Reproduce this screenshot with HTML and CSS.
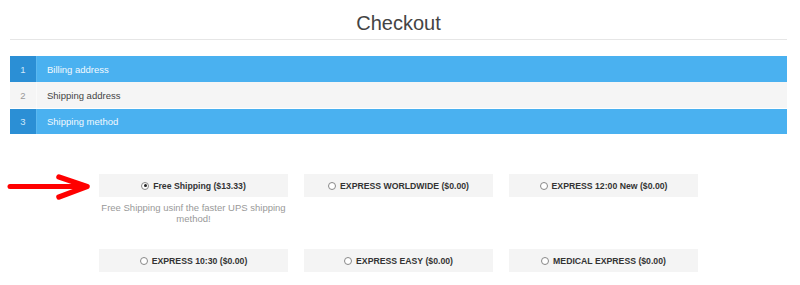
FILE: index.html
```html
<!DOCTYPE html>
<html lang="en">
<head>
  <meta charset="UTF-8" />
  <title>Checkout</title>
  <link rel="stylesheet" href="styles.css">
</head>
<body>
  <div class="page">
    <h1 class="title">Checkout</h1>

    <div class="steps">
      <div class="step active"><span class="num">1</span><span class="label">Billing address</span></div>
      <div class="step"><span class="num">2</span><span class="label">Shipping address</span></div>
      <div class="step active"><span class="num">3</span><span class="label">Shipping method</span></div>
    </div>

    <div class="methods">
      <div class="method">
        <label class="option"><span class="radio checked"></span>Free Shipping ($13.33)</label>
        <p class="desc">Free Shipping usinf the faster UPS shipping method!</p>
      </div>
      <div class="method">
        <label class="option"><span class="radio"></span>EXPRESS WORLDWIDE ($0.00)</label>
      </div>
      <div class="method">
        <label class="option"><span class="radio"></span>EXPRESS 12:00 New ($0.00)</label>
      </div>
      <div class="method">
        <label class="option"><span class="radio"></span>EXPRESS 10:30 ($0.00)</label>
      </div>
      <div class="method">
        <label class="option"><span class="radio"></span>EXPRESS EASY ($0.00)</label>
      </div>
      <div class="method">
        <label class="option"><span class="radio"></span>MEDICAL EXPRESS ($0.00)</label>
      </div>
    </div>

    <!-- annotation arrow pointing at the selected option -->
    <svg class="arrow" width="100" height="35" viewBox="0 0 100 35">
      <line x1="10" y1="16.5" x2="84" y2="16.5" stroke="#f00" stroke-width="5" stroke-linecap="round" />
      <polyline points="59,7 87,16.5 59,27" fill="none" stroke="#f00" stroke-width="5.5" stroke-linecap="round" stroke-linejoin="round" />
    </svg>
  </div>
</body>
</html>
```

FILE: styles.css
```css
body { margin: 0; font-family: "Liberation Sans", Arial, sans-serif; color: #333; background: #fff; }
.page { position: relative; padding: 0 13px 0 10px; }

.title { margin: 0; padding-top: 11px; height: 28px; text-align: center; font-size: 20px; font-weight: normal; color: #444; line-height: 24px; border-bottom: 1px solid #e6e6e6; }

.steps { margin-top: 16px; }
.step { display: flex; height: 26px; align-items: center; background: #f5f5f5; font-size: 9.5px; color: #444; }
.step .num { width: 27px; height: 100%; display: flex; align-items: center; justify-content: center; color: #999; border-right: 1px solid #fafafa; box-sizing: border-box; }
.step .label { padding-left: 10px; }
.step.active { background: #4ab1f0; color: #f2f9fe; }
.step.active .num { background: #2b8fd5; color: #cfe8fa; border-right: 1px solid #5bb8f0; }
.step:last-child { margin-top: 1px; height: 25px; }

.methods { margin: 40px auto 0; width: 599px; display: grid; grid-template-columns: repeat(3, 189px); column-gap: 16px; row-gap: 25px; align-items: start; }
.option { display: flex; align-items: center; justify-content: center; height: 23px; background: #f4f4f4; font-size: 8.7px; font-weight: bold; color: #333; }
.radio { width: 6px; height: 6px; border: 1px solid #888; border-radius: 50%; margin-right: 4px; position: relative; background: #fff; }
.radio.checked::after { content: ""; position: absolute; left: 1.5px; top: 1.5px; width: 3px; height: 3px; border-radius: 50%; background: #222; }
.desc { margin: 5px -6px 0; text-align: center; font-size: 9.5px; line-height: 11px; color: #999; }

.arrow { position: absolute; left: 0; top: 170px; }
```
